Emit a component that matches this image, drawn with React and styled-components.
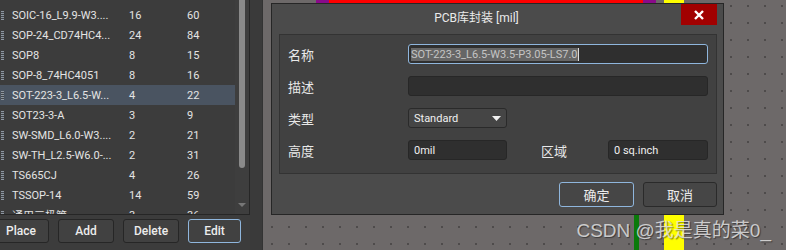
import styled, { createGlobalStyle } from "styled-components";

const GlobalStyle = createGlobalStyle`
  html, body {
    margin: 0;
    padding: 0;
    background: #3c3c3c;
  }
`;

const Screen = styled.div`
  display: flex;
  width: 786px;
  height: 250px;
  overflow: hidden;
  font-family: Roboto, "Noto Sans CJK SC", sans-serif;
  font-size: 11px;
  color: #e4e4e4;
`;

const LeftPanel = styled.div`
  width: 250px;
  display: flex;
  flex-direction: column;
  background: #3c3c3c;
`;

const ListBox = styled.div`
  box-sizing: border-box;
  height: 215px;
  display: flex;
  border-right: 1px solid #262626;
  border-bottom: 1px solid #262626;
  overflow: hidden;
`;

const Rows = styled.div`
  flex: 1;
  padding-top: 5px;
`;

const Row = styled.div`
  height: 20px;
  display: grid;
  grid-template-columns: 12px 117px 58px 1fr;
  align-items: center;
  white-space: nowrap;
  background: ${(p) => (p.$selected ? "#4a5461" : "transparent")};
`;

const ChipIcon = styled.span`
  width: 3px;
  height: 9px;
  margin-left: 1px;
  background: repeating-linear-gradient(#8e96a0 0 1px, #44484c 1px 2px);
`;

const ScrollTrack = styled.div`
  width: 14px;
  position: relative;
  background: #3e3e3e;
`;

const ScrollThumb = styled.div`
  margin-left: 4px;
  width: 6px;
  height: 168px;
  border-radius: 0 0 3px 3px;
  background: #8a8a8a;
`;

const ScrollArrow = styled.div`
  position: absolute;
  left: 3px;
  top: 203px;
  width: 0;
  height: 0;
  border-left: 4px solid transparent;
  border-right: 4px solid transparent;
  border-top: 4px solid #777;
`;

const ButtonBar = styled.div`
  display: flex;
  gap: 9px;
  padding-top: 4px;
  margin-left: -7px;
`;

const PanelButton = styled.button`
  box-sizing: border-box;
  width: ${(p) => p.$w || 56}px;
  height: 24px;
  padding: 0;
  border-radius: 3px;
  border: 1px solid ${(p) => (p.$focused ? "#8fb6dd" : "#262626")};
  background: #414141;
  color: #ececec;
  font-family: Roboto, sans-serif;
  font-size: 12px;
  font-weight: 500;
`;

const Splitter = styled.div`
  width: 12px;
  background: #3a3a3a;
  border-right: 1px solid #333;
`;

const Canvas = styled.div`
  flex: 1;
  position: relative;
  background-color: #6d6969;
  background-image: radial-gradient(circle at 1px 1px, #4e4b4b 0.8px, transparent 1px);
  background-size: 17px 17px;
  background-position: 8px 5px;
`;

const Trace = styled.div`
  position: absolute;
  left: ${(p) => p.$x}px;
  top: ${(p) => p.$y || 0}px;
  width: ${(p) => p.$w}px;
  height: ${(p) => (p.$h ? `${p.$h}px` : "auto")};
  bottom: ${(p) => (p.$h ? "auto" : "0")};
  background: ${(p) => p.$color};
`;

const Dialog = styled.div`
  position: absolute;
  left: 8px;
  top: 3px;
  box-sizing: border-box;
  width: 453px;
  height: 212px;
  border: 1px solid #262626;
  background: #4b4b4b;
  display: flex;
  flex-direction: column;
`;

const TitleBar = styled.div`
  height: 30px;
  display: flex;
  align-items: flex-start;
`;

const Title = styled.div`
  flex: 1;
  text-align: center;
  line-height: 28px;
  font-size: 12px;
  color: #eaeaea;
`;

const CloseButton = styled.div`
  width: 36px;
  height: 21px;
  margin-right: 6px;
  background: #a10000;
  display: flex;
  align-items: center;
  justify-content: center;
`;

const Group = styled.div`
  box-sizing: border-box;
  height: 140px;
  margin: 0 6px 0 7px;
  padding: 9px 8px 0 8px;
  border: 1px solid #333;
  background: #414141;
  display: flex;
  flex-direction: column;
  gap: 12px;
`;

const FieldRow = styled.div`
  display: flex;
  align-items: center;
  height: 20px;
`;

const Label = styled.div`
  width: ${(p) => p.$w || 120}px;
  margin-left: ${(p) => p.$offset || 0}px;
  font-size: 13px;
  color: #e8e8e8;
`;

const Input = styled.div`
  box-sizing: border-box;
  width: ${(p) => p.$w || 300}px;
  height: 20px;
  border-radius: 3px;
  border: 1px solid ${(p) => (p.$focused ? "#8fb6dd" : "#272727")};
  background: #2f2f2f;
  display: flex;
  align-items: center;
  padding-left: ${(p) => (p.$focused ? 2 : 5)}px;
  font-size: 11px;
  color: #f0f0f0;
  white-space: nowrap;
  overflow: hidden;
`;

const Selection = styled.span`
  background: #666;
  color: #c4c4c4;
  padding-right: 1px;
  border-right: 1px solid #ddd;
`;

const Select = styled.div`
  box-sizing: border-box;
  width: 99px;
  height: 20px;
  border-radius: 3px;
  border: 1px solid #2a2a2a;
  background: #454545;
  display: flex;
  align-items: center;
  justify-content: space-between;
  padding: 0 5px 0 5px;
  font-size: 11px;
  color: #f0f0f0;
`;

const Footer = styled.div`
  display: flex;
  justify-content: flex-end;
  gap: 9px;
  margin: 8px 6px 0 0;
`;

const DialogButton = styled.button`
  box-sizing: border-box;
  width: ${(p) => p.$w}px;
  height: 25px;
  padding: 0;
  border-radius: 3px;
  border: 1px solid ${(p) => (p.$primary ? "#8fb6dd" : "#2a2a2a")};
  background: #464646;
  color: #ececec;
  font-family: Roboto, "Noto Sans CJK SC", sans-serif;
  font-size: 13px;
`;

const Watermark = styled.div`
  position: absolute;
  right: 15px;
  bottom: 8px;
  font-family: "Liberation Sans", "Noto Sans CJK SC", sans-serif;
  font-size: 19px;
  color: rgba(225, 225, 225, 0.85);
  text-shadow: 1px 1px 1px rgba(0, 0, 0, 0.45);
  white-space: nowrap;
`;

const footprints = [
  ["SOIC-16_L9.9-W3....", 16, 60],
  ["SOP-24_CD74HC4...", 24, 84],
  ["SOP8", 8, 15],
  ["SOP-8_74HC4051", 8, 16],
  ["SOT-223-3_L6.5-W...", 4, 22],
  ["SOT23-3-A", 3, 9],
  ["SW-SMD_L6.0-W3....", 2, 21],
  ["SW-TH_L2.5-W6.0-...", 2, 31],
  ["TS665CJ", 4, 26],
  ["TSSOP-14", 14, 59],
  ["通用三极管", 3, 36],
];

export default function App() {
  return (
    <Screen>
      <GlobalStyle />
      <LeftPanel>
        <ListBox>
          <Rows>
            {footprints.map(([name, pads, prims], i) => (
              <Row key={i} $selected={i === 4}>
                <ChipIcon />
                <span>{name}</span>
                <span>{pads}</span>
                <span>{prims}</span>
              </Row>
            ))}
          </Rows>
          <ScrollTrack>
            <ScrollThumb />
            <ScrollArrow />
          </ScrollTrack>
        </ListBox>
        <ButtonBar>
          <PanelButton>Place</PanelButton>
          <PanelButton>Add</PanelButton>
          <PanelButton>Delete</PanelButton>
          <PanelButton $w={53} $focused>Edit</PanelButton>
        </ButtonBar>
      </LeftPanel>
      <Splitter />
      <Canvas>
        <Trace $x={53} $w={13} $h={3} $color="#8a0a8a" />
        <Trace $x={66} $w={314} $h={3} $color="#ff0000" />
        <Trace $x={380} $w={13} $h={3} $color="#8a0a8a" />
        <Trace $x={371} $y={120} $w={5} $color="#0a7a0a" />
        <Trace $x={401} $w={20} $color="#ffff00" />
        <Dialog>
          <TitleBar>
            <Title>PCB库封装 [mil]</Title>
            <CloseButton>
              <svg width="10" height="10" viewBox="0 0 10 10">
                <path d="M1 1 L9 9 M9 1 L1 9" stroke="#fff" strokeWidth="2.4" />
              </svg>
            </CloseButton>
          </TitleBar>
          <Group>
            <FieldRow>
              <Label>名称</Label>
              <Input $focused>
                <Selection>SOT-223-3_L6.5-W3.5-P3.05-LS7.0</Selection>
              </Input>
            </FieldRow>
            <FieldRow>
              <Label>描述</Label>
              <Input />
            </FieldRow>
            <FieldRow>
              <Label>类型</Label>
              <Select>
                Standard
                <svg width="9" height="5" viewBox="0 0 9 5">
                  <path d="M0 0 H9 L4.5 5 Z" fill="#f0f0f0" />
                </svg>
              </Select>
            </FieldRow>
            <FieldRow>
              <Label>高度</Label>
              <Input $w={99}>0mil</Input>
              <Label $w={67} $offset={34}>区域</Label>
              <Input $w={100}>0 sq.inch</Input>
            </FieldRow>
          </Group>
          <Footer>
            <DialogButton $w={75} $primary>确定</DialogButton>
            <DialogButton $w={74}>取消</DialogButton>
          </Footer>
        </Dialog>
        <Watermark>CSDN @我是真的菜0_</Watermark>
      </Canvas>
    </Screen>
  );
}
